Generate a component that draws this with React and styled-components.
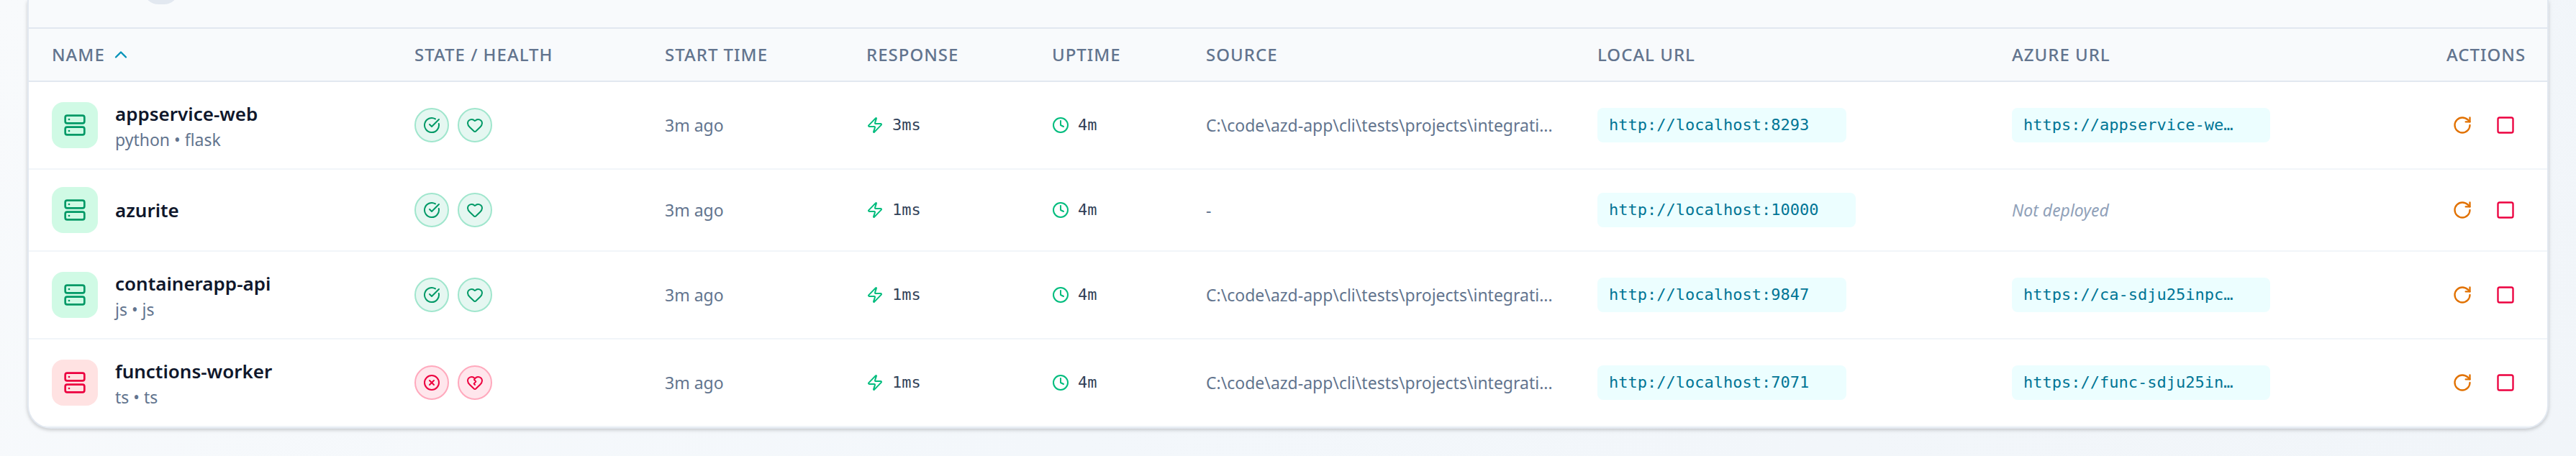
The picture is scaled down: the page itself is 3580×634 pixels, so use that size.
import React from 'react';
import styled, { createGlobalStyle } from 'styled-components';
import {
  ChevronUp,
  CircleCheckBig,
  CircleX,
  Clock,
  ExternalLink,
  Heart,
  HeartCrack,
  RotateCw,
  Server,
  Square,
  Zap,
} from 'lucide-react';

const sans = `'Noto Sans', 'Open Sans', sans-serif`;
const mono = `'DejaVu Sans Mono', 'Liberation Mono', monospace`;

const tones = {
  good: { tile: '#d0fae5', chip: '#e5f7f1', ring: '#a0e6cd', ink: '#009966' },
  bad: { tile: '#ffe2e2', chip: '#ffe6ec', ring: '#ffa9bd', ink: '#ec003f' },
};

const GlobalStyle = createGlobalStyle`
  * {
    box-sizing: border-box;
  }

  body {
    margin: 0;
    font-family: ${sans};
    background-color: #f3f6fa;
  }
`;

const Page = styled.main`
  min-height: 100vh;
  padding: 0 38px 38px;
  background: linear-gradient(135deg, #f8fafc 0%, #f3f7fb 50%, #f1f5f9 100%);
`;

const Card = styled.section`
  overflow: hidden;
  background-color: #ffffff;
  border: 2px solid #e2e8f0;
  border-top: none;
  border-radius: 0 0 32px 32px;
  box-shadow: 0 2px 6px rgba(0, 0, 0, 0.1), 0 2px 4px rgba(0, 0, 0, 0.1);
`;

const Toolbar = styled.header`
  display: flex;
  align-items: flex-end;
  height: 40px;
  padding: 0 32px 32px 160px;
  overflow: hidden;
  background-color: #f8fafc;
  border-bottom: 2px solid #e2e8f0;
`;

/* mostly scrolled out, only its lower edge stays in view */
const CountBadge = styled.div`
  flex: none;
  width: 48px;
  height: 40px;
  border-radius: 20px;
  background-color: #e2e8f0;
`;

const Table = styled.table`
  width: 100%;
  table-layout: fixed;
  border-collapse: separate;
  border-spacing: 0;
`;

const Col = styled.col`
  width: ${({ $width }) => $width}px;
`;

const HeadCell = styled.th`
  height: 74px;
  padding: 0 32px;
  background-color: #f8fafc;
  border-bottom: 2px solid #e2e8f0;
  color: #62748e;
  font-size: 24px;
  font-weight: 500;
  line-height: 32px;
  letter-spacing: 1px;
  text-align: ${({ $right }) => ($right ? 'right' : 'left')};
  text-transform: uppercase;
  white-space: nowrap;
`;

const SortButton = styled.button`
  display: flex;
  align-items: center;
  gap: 8px;
  padding: 0;
  border: none;
  background: none;
  color: inherit;
  font: inherit;
  letter-spacing: inherit;
  text-transform: inherit;
  cursor: pointer;

  svg {
    color: #0092b8;
  }
`;

const Cell = styled.td`
  padding: 24px 32px;
  border-bottom: 2px solid #f1f5f9;
  color: #62748e;
  font-size: 23px;
  line-height: 32px;
  vertical-align: middle;
  white-space: nowrap;
`;

const Inline = styled.div`
  display: flex;
  align-items: center;
  gap: ${({ $gap }) => $gap || 12}px;
  justify-content: ${({ $end }) => ($end ? 'flex-end' : 'flex-start')};
`;

const Tile = styled.div`
  display: flex;
  align-items: center;
  justify-content: center;
  flex: none;
  width: 64px;
  height: 64px;
  border-radius: 16px;
  background-color: ${({ $tone }) => tones[$tone].tile};
  color: ${({ $tone }) => tones[$tone].ink};
`;

const Name = styled.div`
  color: #0f172b;
  font-size: 26px;
  font-weight: 600;
  line-height: 40px;
`;

const Stack = styled.div`
  color: #62748e;
  font-size: 23px;
  line-height: 32px;
`;

const StatusChip = styled.span`
  display: flex;
  align-items: center;
  justify-content: center;
  width: 48px;
  height: 48px;
  border: 2px solid ${({ $tone }) => tones[$tone].ring};
  border-radius: 50%;
  background-color: ${({ $tone }) => tones[$tone].chip};
  color: ${({ $tone }) => tones[$tone].ink};
`;

const Metric = styled(Inline)`
  color: #314158;
  font-family: ${mono};
  font-size: 22px;

  svg {
    color: #00bc7d;
  }
`;

const UrlLink = styled.a`
  display: inline-flex;
  align-items: center;
  gap: 12px;
  height: 48px;
  padding: 0 16px;
  border-radius: 8px;
  background-color: #ecfeff;
  color: #007595;
  font-family: ${mono};
  font-size: 22px;
  text-decoration: none;
  vertical-align: middle;

  svg {
    opacity: 0;
  }

  &:hover svg {
    opacity: 1;
  }
`;

const NotDeployed = styled.em`
  color: #90a1b9;
`;

const ActionButton = styled.button`
  display: flex;
  padding: 12px;
  border: none;
  border-radius: 12px;
  background: none;
  color: ${({ $color }) => $color};
  cursor: pointer;

  &:hover {
    background-color: #f1f5f9;
  }
`;

const widths = [504, 348, 280, 258, 214, 544, 576, 604, 172];

const headings = ['State / Health', 'Start Time', 'Response', 'Uptime', 'Source', 'Local URL', 'Azure URL'];

const path = 'C:\\code\\azd-app\\cli\\tests\\projects\\integrati...';

const services = [
  {
    name: 'appservice-web',
    stack: 'python • flask',
    tone: 'good',
    response: '3ms',
    source: path,
    local: 'http://localhost:8293',
    azure: 'https://appservice-we…',
  },
  {
    name: 'azurite',
    tone: 'good',
    response: '1ms',
    source: '-',
    local: 'http://localhost:10000',
  },
  {
    name: 'containerapp-api',
    stack: 'js • js',
    tone: 'good',
    response: '1ms',
    source: path,
    local: 'http://localhost:9847',
    azure: 'https://ca-sdju25inpc…',
  },
  {
    name: 'functions-worker',
    stack: 'ts • ts',
    tone: 'bad',
    response: '1ms',
    source: path,
    local: 'http://localhost:7071',
    azure: 'https://func-sdju25in…',
  },
];

function Url({ href }) {
  return (
    <UrlLink href={href}>
      {href}
      <ExternalLink size={24} />
    </UrlLink>
  );
}

function ServiceRow({ service }) {
  const { name, stack, tone, response, source, local, azure } = service;
  const StateIcon = tone === 'good' ? CircleCheckBig : CircleX;
  const HealthIcon = tone === 'good' ? Heart : HeartCrack;

  return (
    <tr>
      <Cell>
        <Inline $gap={24}>
          <Tile $tone={tone}><Server size={32} /></Tile>
          <div>
            <Name>{name}</Name>
            {stack && <Stack>{stack}</Stack>}
          </div>
        </Inline>
      </Cell>
      <Cell>
        <Inline>
          <StatusChip $tone={tone}><StateIcon size={24} /></StatusChip>
          <StatusChip $tone={tone}><HealthIcon size={24} /></StatusChip>
        </Inline>
      </Cell>
      <Cell>3m ago</Cell>
      <Cell><Metric><Zap size={24} />{response}</Metric></Cell>
      <Cell><Metric><Clock size={24} />4m</Metric></Cell>
      <Cell>{source}</Cell>
      <Cell><Url href={local} /></Cell>
      <Cell>{azure ? <Url href={azure} /> : <NotDeployed>Not deployed</NotDeployed>}</Cell>
      <Cell>
        <Inline $gap={8} $end>
          <ActionButton $color="#e17100" aria-label={`Restart ${name}`}><RotateCw size={28} /></ActionButton>
          <ActionButton $color="#ec003f" aria-label={`Stop ${name}`}><Square size={28} /></ActionButton>
        </Inline>
      </Cell>
    </tr>
  );
}

export default function App() {
  return (
    <>
      <GlobalStyle />
      <Page>
        <Card>
          <Toolbar><CountBadge /></Toolbar>
          <Table>
            <colgroup>
              {widths.map((width, i) => <Col key={i} $width={width} />)}
            </colgroup>
            <thead>
              <tr>
                <HeadCell aria-sort="ascending">
                  <SortButton>Name <ChevronUp size={28} /></SortButton>
                </HeadCell>
                {headings.map((heading) => <HeadCell key={heading}>{heading}</HeadCell>)}
                <HeadCell $right>Actions</HeadCell>
              </tr>
            </thead>
            <tbody>
              {services.map((service) => <ServiceRow key={service.name} service={service} />)}
            </tbody>
          </Table>
        </Card>
      </Page>
    </>
  );
}
